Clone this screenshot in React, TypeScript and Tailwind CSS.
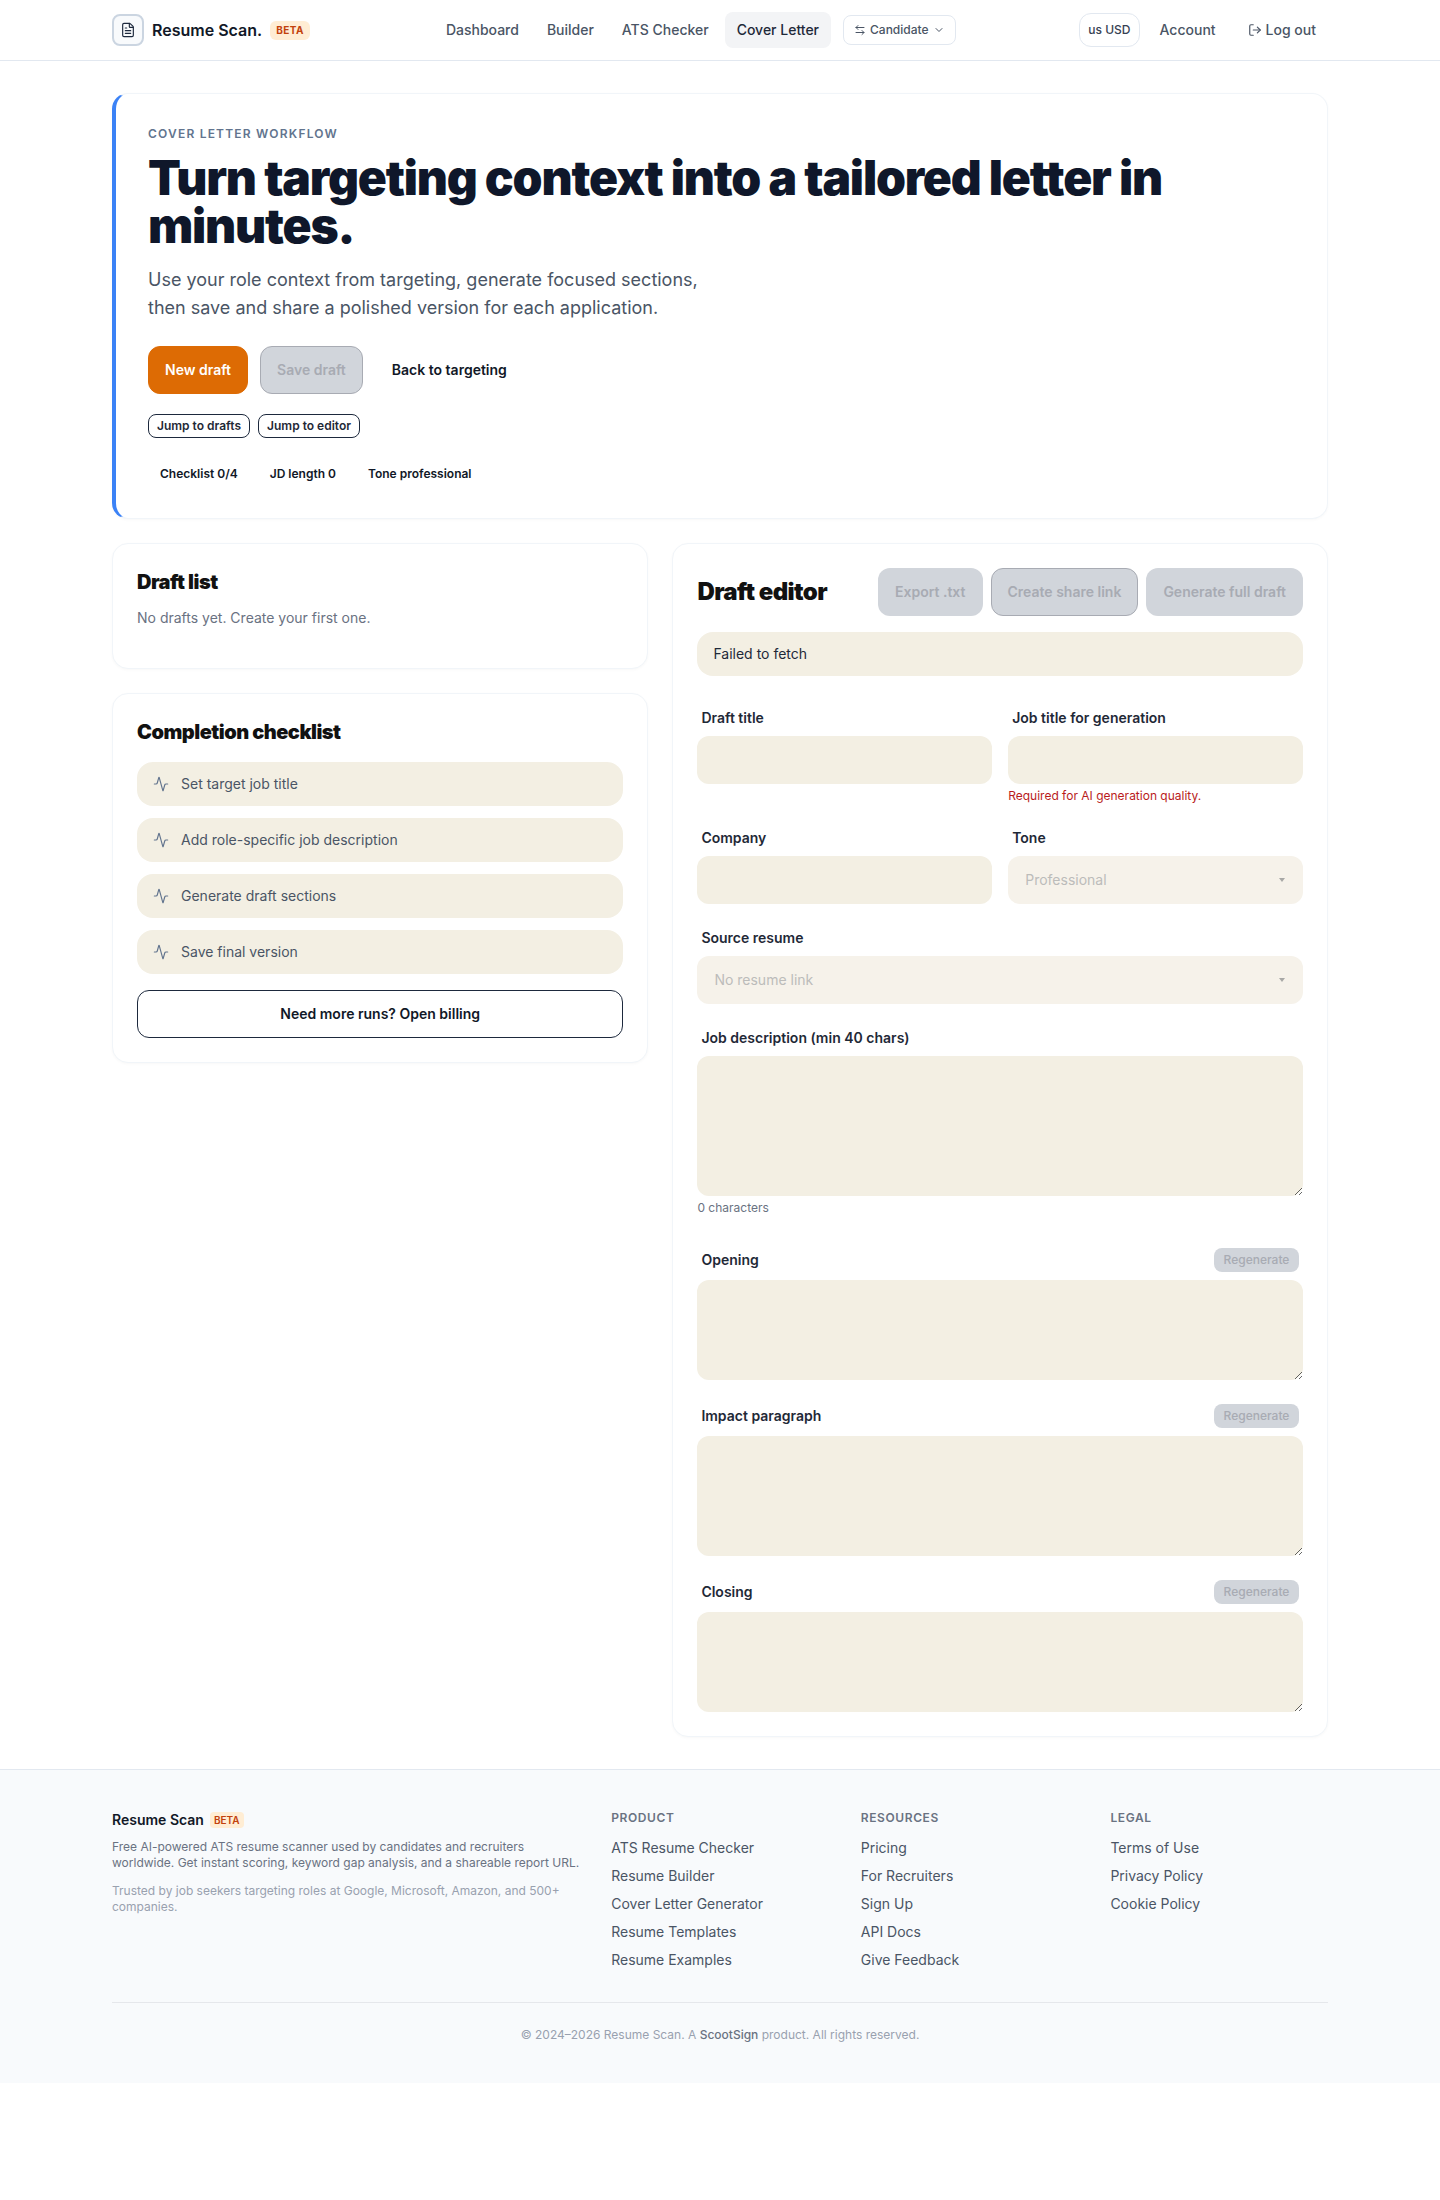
import { Activity, ArrowLeftRight, ChevronDown, FileText, LogOut } from "lucide-react";

const navLinks = ["Dashboard", "Builder", "ATS Checker"];
const checklist = [
  "Set target job title",
  "Add role-specific job description",
  "Generate draft sections",
  "Save final version",
];
const footerColumns = [
  {
    title: "Product",
    links: ["ATS Resume Checker", "Resume Builder", "Cover Letter Generator", "Resume Templates", "Resume Examples"],
  },
  {
    title: "Resources",
    links: ["Pricing", "For Recruiters", "Sign Up", "API Docs", "Give Feedback"],
  },
  {
    title: "Legal",
    links: ["Terms of Use", "Privacy Policy", "Cookie Policy"],
  },
];

function BetaBadge({ small }: { small?: boolean }) {
  return (
    <span
      className={
        small
          ? "rounded bg-orange-100 px-1 text-[10px] leading-4 font-semibold text-[#c2410c]"
          : "rounded-md bg-orange-100 px-1.5 py-0.5 text-[10px] leading-[15px] font-bold tracking-[0.05em] text-[#c2410c]"
      }
    >
      BETA
    </span>
  );
}

function DisabledButton({ label, outlined }: { label: string; outlined?: boolean }) {
  return (
    <button
      disabled
      className={`h-12 rounded-xl border bg-[#d1d5db] px-4 text-sm font-semibold text-[#a8abb3] ${
        outlined ? "border-[#a8abb3]" : "border-transparent"
      }`}
    >
      {label}
    </button>
  );
}

function FieldLabel({ children }: { children: string }) {
  return <label className="block px-1 text-sm font-semibold text-[#1f2937]">{children}</label>;
}

function SelectBox({ value }: { value: string }) {
  return (
    <div className="mt-2 flex h-12 w-full items-center justify-between rounded-xl bg-[#f6f2ea] pr-[18px] pl-[17px] text-sm text-[#bcbcba]">
      {value}
      <svg width="6" height="4" viewBox="0 0 6 4">
        <path d="M0 0h6L3 4z" fill="#a8a8a6" />
      </svg>
    </div>
  );
}

function SectionField({ label, height }: { label: string; height: string }) {
  return (
    <div>
      <div className="flex h-6 items-center justify-between pr-1">
        <FieldLabel>{label}</FieldLabel>
        <button disabled className="h-6 w-[85px] rounded-lg bg-[#d1d5db] text-xs font-medium text-[#a8abb3]">
          Regenerate
        </button>
      </div>
      <textarea className={`mt-2 block w-full rounded-xl bg-[#f3efe3] ${height}`} />
    </div>
  );
}

export default function App() {
  return (
    <div className="bg-white font-['Inter',sans-serif] text-[#111827]">
      {/* Top nav */}
      <header className="border-b border-slate-200">
        <div className="mx-auto flex h-[60px] max-w-[1280px] items-center justify-between px-8">
          <div className="flex items-center gap-2">
            <span className="flex h-8 w-8 items-center justify-center rounded-lg border-2 border-[#cbd5e1] bg-slate-50">
              <FileText size={16} strokeWidth={1.75} className="text-slate-800" />
            </span>
            <span className="text-base font-semibold text-[#111827]">Resume Scan.</span>
            <BetaBadge />
          </div>

          <nav className="flex items-center gap-1">
            {navLinks.map((link) => (
              <a key={link} className="rounded-lg px-3 py-2 text-sm font-medium text-gray-600">
                {link}
              </a>
            ))}
            <a className="rounded-lg bg-gray-100 px-3 py-2 text-sm font-medium text-gray-800">Cover Letter</a>
            <button className="ml-2 flex h-[30px] items-center gap-1 rounded-lg border border-slate-200 px-2.5 text-xs font-medium text-gray-600">
              <ArrowLeftRight size={12} />
              Candidate
              <ChevronDown size={12} />
            </button>
          </nav>

          <div className="flex items-center gap-2">
            <button className="h-[34px] rounded-xl border border-slate-200 px-2 text-xs font-medium text-gray-700">
              us USD
            </button>
            <a className="rounded-lg px-3 py-2 text-sm font-medium text-gray-600">Account</a>
            <a className="flex items-center gap-1 rounded-lg px-3 py-2 text-sm font-medium text-gray-600">
              <LogOut size={14} />
              Log out
            </a>
          </div>
        </div>
      </header>

      <main className="mx-auto max-w-[1280px] px-8 pt-8 pb-8">
        {/* Hero */}
        <section className="rounded-2xl border border-l-4 border-slate-100 border-l-[#3b82f6] bg-white p-8 shadow-[0_1px_3px_rgba(15,23,42,0.03)]">
          <p className="text-xs font-semibold tracking-[0.1em] text-slate-500 uppercase">Cover letter workflow</p>
          <h1 className="mt-3 text-5xl leading-none font-black tracking-tight text-[#0f172a]">
            Turn targeting context into a tailored letter in minutes.
          </h1>
          <p className="mt-4 max-w-2xl text-lg leading-7 text-gray-600">
            Use your role context from targeting, generate focused sections,
            <br />
            then save and share a polished version for each application.
          </p>
          <div className="mt-6 flex items-center gap-3">
            <button className="h-12 rounded-xl border border-[#dd6b04] bg-[#dd6b04] px-4 text-sm font-semibold text-white">
              New draft
            </button>
            <DisabledButton label="Save draft" outlined />
            <a className="border border-transparent px-4 text-sm font-semibold text-[#111827]">Back to targeting</a>
          </div>
          <div className="mt-5 flex gap-2">
            <a className="flex h-6 items-center rounded-lg border border-slate-800 px-2 text-xs font-semibold text-[#1f2937]">
              Jump to drafts
            </a>
            <a className="flex h-6 items-center rounded-lg border border-slate-800 px-2 text-xs font-semibold text-[#1f2937]">
              Jump to editor
            </a>
          </div>
          <div className="mt-6 flex gap-2 text-xs font-semibold text-[#111827]">
            <span className="px-3 py-1">Checklist 0/4</span>
            <span className="px-3 py-1">JD length 0</span>
            <span className="px-3 py-1">Tone professional</span>
          </div>
        </section>

        <div className="mt-6 grid grid-cols-[0.9fr_1.1fr] items-start gap-6">
          {/* Left column */}
          <div className="flex flex-col gap-6">
            <section className="rounded-2xl border border-slate-100 bg-white p-6 shadow-[0_1px_3px_rgba(15,23,42,0.03)]">
              <h2 className="text-xl font-black tracking-tight text-[#111111]">Draft list</h2>
              <p className="mt-3 mb-4 text-sm text-gray-500">No drafts yet. Create your first one.</p>
            </section>

            <section className="rounded-2xl border border-slate-100 bg-white p-6 shadow-[0_1px_3px_rgba(15,23,42,0.03)]">
              <h2 className="text-xl font-black tracking-tight text-[#111111]">Completion checklist</h2>
              <ul className="mt-4 flex flex-col gap-3">
                {checklist.map((item) => (
                  <li
                    key={item}
                    className="flex h-11 items-center gap-3 rounded-2xl bg-[#f3efe3] px-4 text-sm text-gray-600"
                  >
                    <Activity size={16} strokeWidth={1.75} className="text-slate-500" />
                    {item}
                  </li>
                ))}
              </ul>
              <button className="mt-4 h-12 w-full rounded-xl border border-slate-800 bg-white text-sm font-semibold text-[#111827]">
                Need more runs? Open billing
              </button>
            </section>
          </div>

          {/* Draft editor */}
          <section className="rounded-2xl border border-slate-100 bg-white p-6 shadow-[0_1px_3px_rgba(15,23,42,0.03)]">
            <div className="flex items-center justify-between">
              <h2 className="text-2xl font-black tracking-tight text-[#111111]">Draft editor</h2>
              <div className="flex gap-2">
                <DisabledButton label="Export .txt" />
                <DisabledButton label="Create share link" outlined />
                <DisabledButton label="Generate full draft" />
              </div>
            </div>

            <div className="mt-4 flex h-11 items-center rounded-2xl bg-[#f3efe3] px-4 text-sm text-gray-800">
              Failed to fetch
            </div>

            <div className="mt-8 grid grid-cols-2 gap-x-4 gap-y-6">
              <div>
                <FieldLabel>Draft title</FieldLabel>
                <input className="mt-2 block h-12 w-full rounded-xl bg-[#f3efe3]" />
              </div>
              <div>
                <FieldLabel>Job title for generation</FieldLabel>
                <input className="mt-2 block h-12 w-full rounded-xl bg-[#f3efe3]" />
                <p className="mt-1 text-xs text-[#b91c1c]">Required for AI generation quality.</p>
              </div>
              <div>
                <FieldLabel>Company</FieldLabel>
                <input className="mt-2 block h-12 w-full rounded-xl bg-[#f3efe3]" />
              </div>
              <div>
                <FieldLabel>Tone</FieldLabel>
                <SelectBox value="Professional" />
              </div>
              <div className="col-span-2">
                <FieldLabel>Source resume</FieldLabel>
                <SelectBox value="No resume link" />
              </div>
              <div className="col-span-2">
                <FieldLabel>Job description (min 40 chars)</FieldLabel>
                <textarea className="mt-2 block h-[140px] w-full rounded-xl bg-[#f3efe3]" />
                <p className="mt-1 text-xs text-gray-500">0 characters</p>
              </div>
            </div>

            <div className="mt-8 flex flex-col gap-6">
              <SectionField label="Opening" height="h-[100px]" />
              <SectionField label="Impact paragraph" height="h-[120px]" />
              <SectionField label="Closing" height="h-[100px]" />
            </div>
          </section>
        </div>
      </main>

      {/* Footer */}
      <footer className="border-t border-slate-200 bg-slate-50">
        <div className="mx-auto max-w-[1280px] px-8 pt-10 pb-10">
          <div className="grid grid-cols-5 gap-8">
            <div className="col-span-2">
              <div className="flex items-center gap-1.5">
                <span className="text-sm font-semibold text-[#111827]">Resume Scan</span>
                <BetaBadge small />
              </div>
              <p className="mt-[9px] text-xs text-gray-500">
                Free AI-powered ATS resume scanner used by candidates and recruiters worldwide. Get instant scoring,
                keyword gap analysis, and a shareable report URL.
              </p>
              <p className="mt-3 text-xs text-gray-400">
                Trusted by job seekers targeting roles at Google, Microsoft, Amazon, and 500+ companies.
              </p>
            </div>
            {footerColumns.map((column) => (
              <div key={column.title}>
                <h3 className="text-xs font-semibold tracking-wider text-gray-500 uppercase">{column.title}</h3>
                <ul className="mt-3 flex flex-col gap-2">
                  {column.links.map((link) => (
                    <li key={link} className="text-sm text-gray-600">
                      {link}
                    </li>
                  ))}
                </ul>
              </div>
            ))}
          </div>
          <div className="mt-8 border-t border-gray-200 pt-6 text-center text-xs text-gray-400">
            © 2024–2026 Resume Scan. A <span className="font-medium text-gray-500">ScootSign</span> product. All
            rights reserved.
          </div>
        </div>
      </footer>
    </div>
  );
}
